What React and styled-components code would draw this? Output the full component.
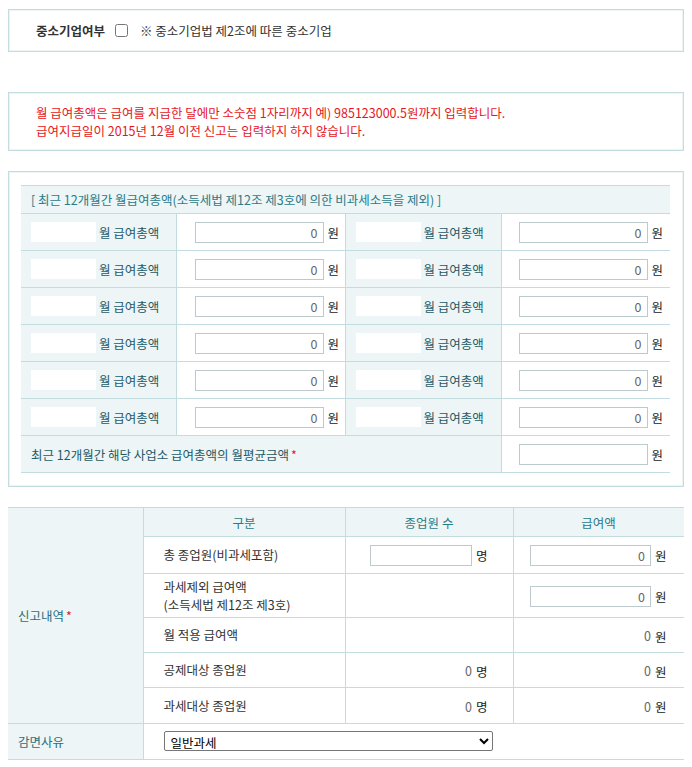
import React from 'react';
import styled, { createGlobalStyle } from 'styled-components';

const GlobalStyle = createGlobalStyle`
	body {
		margin: 8px;
		font-family: "Noto Sans CJK KR", "Liberation Sans", sans-serif;
		font-size: 12.5px;
		color: #333;
		background: #fff;
	}
	input, select {
		font-family: "Noto Sans CJK KR", "Liberation Sans", sans-serif;
		font-size: 12.5px;
	}
`;

const Page = styled.div`
	padding-top: 1px;
	display: flex;
	flex-direction: column;
`;

const Box = styled.div`
	border: 1px solid #c3dcdf;
	box-shadow: inset 0 0 0 1px #eef5f6;
	padding: ${(p) => p.$pad || '0'};
	margin-bottom: ${(p) => p.$gap || '0'};
`;

const CheckRow = styled.div`
	display: flex;
	align-items: center;
	height: 41px;
	padding-left: 27px;
`;

const CheckTitle = styled.span`
	font-weight: bold;
	color: #333;
`;

const Check = styled.input`
	width: 13px;
	height: 13px;
	margin: 0 12px 0 10px;
`;

const Notice = styled.p`
	margin: 0;
	padding-left: 27px;
	color: #e8161b;
	line-height: 18px;
`;

const Table = styled.table`
	width: ${(p) => p.$width}px;
	border-collapse: collapse;
	table-layout: fixed;
`;

const Caption = styled.td`
	height: 27px;
	padding: 0 0 0 10px;
	background: #edf5f6;
	border-top: 1px solid #c3dcdf;
	border-bottom: 1px solid #c3dcdf;
	color: #2a7b88;
`;

const Row = styled.tr`
	height: ${(p) => p.$h}px;
	border-bottom: 1px solid #c3dcdf;
`;

const LabelCell = styled.td`
	padding: 0 0 0 10px;
	background: #edf5f6;
	border-right: 1px solid #c3dcdf;
	color: #1f5b66;
	white-space: nowrap;
`;

const LabelLine = styled.div`
	display: flex;
	align-items: center;
	gap: 3px;
`;

const MonthBox = styled.span`
	width: 65px;
	height: 20px;
	background: #fff;
`;

const InputCell = styled.td`
	padding: 0 0 0 ${(p) => p.$pl || 17}px;
	border-right: ${(p) => (p.$last ? 'none' : '1px solid #c3dcdf')};
	white-space: nowrap;
`;

const Amount = styled.input`
	box-sizing: border-box;
	width: ${(p) => p.$w}px;
	height: 21px;
	border: 1px solid #bccacd;
	padding: 0 5px;
	text-align: right;
	color: #666;
	vertical-align: middle;
	outline: none;
`;

const Unit = styled.span`
	margin-left: 4px;
	vertical-align: middle;
	color: #222;
`;

const Star = styled.span`
	color: #e8161b;
	margin-left: 2px;
`;

const ReportTable = styled(Table)`
	border-top: 1px solid #c3dcdf;
	border-right: 1px solid #c3dcdf;
`;

const SideHead = styled.td`
	padding: 0 0 0 10px;
	background: #edf5f6;
	border-right: 1px solid #c3dcdf;
	border-bottom: 1px solid #c3dcdf;
	color: #2a6f7b;
	white-space: nowrap;
`;

const ColHead = styled.td`
	background: #edf5f6;
	text-align: center;
	color: #2a7b88;
	border-right: 1px solid #c3dcdf;
`;

const TextCell = styled.td`
	padding: 0 0 0 20px;
	border-right: 1px solid #c3dcdf;
	line-height: 18px;
	color: #333;
`;

const ValueCell = styled.td`
	padding: 0 ${(p) => p.$pr}px 0 0;
	text-align: right;
	border-right: 1px solid #c3dcdf;
	white-space: nowrap;
`;

const Zero = styled.span`
	color: #666;
	vertical-align: middle;
`;

const SelectCell = styled.td`
	padding: 0 0 0 20px;
`;

const Reason = styled.select`
	width: 329px;
	height: 20px;
	border: 1px solid #767676;
	border-radius: 2px;
	background: #fff;
	color: #000;
	padding: 0 2px;
`;

const months = [0, 1, 2, 3, 4, 5];

const MonthLabel = () => (
	<LabelCell>
		<LabelLine>
			<MonthBox />
			월 급여총액
		</LabelLine>
	</LabelCell>
);

const MonthPair = () => (
	<Row $h={37}>
		<MonthLabel />
		<InputCell $pl={18}>
			<Amount $w={129} defaultValue="0" />
			<Unit>원</Unit>
		</InputCell>
		<MonthLabel />
		<InputCell $last>
			<Amount $w={129} defaultValue="0" />
			<Unit>원</Unit>
		</InputCell>
	</Row>
);

const App = () => {
	return (
		<Page>
			<GlobalStyle />
			<Box $gap="40px">
				<CheckRow>
					<CheckTitle>중소기업여부</CheckTitle>
					<Check type="checkbox" />
					<span>※ 중소기업법 제2조에 따른 중소기업</span>
				</CheckRow>
			</Box>

			<Box $gap="20px" $pad="11px 0 10px">
				<Notice>
					월 급여총액은 급여를 지급한 달에만 소숫점 1자리까지 예) 985123000.5원까지 입력합니다.
					<br />
					급여지급일이 2015년 12월 이전 신고는 입력하지 하지 않습니다.
				</Notice>
			</Box>

			<Box $gap="20px" $pad="13px 13px 13px 12px">
				<Table $width={649}>
					<colgroup>
						<col style={{ width: 155 }} />
						<col style={{ width: 169 }} />
						<col style={{ width: 156 }} />
						<col style={{ width: 169 }} />
					</colgroup>
					<tbody>
						<tr>
							<Caption colSpan={4}>
								[ 최근 12개월간 월급여총액(소득세법 제12조 제3호에 의한 비과세소득을 제외) ]
							</Caption>
						</tr>
						{months.map((m) => (
							<MonthPair key={m} />
						))}
						<Row $h={37}>
							<LabelCell colSpan={3}>
								최근 12개월간 해당 사업소 급여총액의 월평균금액
								<Star>*</Star>
							</LabelCell>
							<InputCell $last>
								<Amount $w={129} />
								<Unit>원</Unit>
							</InputCell>
						</Row>
					</tbody>
				</Table>
			</Box>

			<ReportTable $width={676}>
				<colgroup>
					<col style={{ width: 135 }} />
					<col style={{ width: 202 }} />
					<col style={{ width: 168 }} />
					<col style={{ width: 171 }} />
				</colgroup>
				<tbody>
					<Row $h={29}>
						<SideHead rowSpan={6}>
							신고내역
							<Star>*</Star>
						</SideHead>
						<ColHead>구분</ColHead>
						<ColHead>종업원 수</ColHead>
						<ColHead>급여액</ColHead>
					</Row>
					<Row $h={37}>
						<TextCell>총 종업원(비과세포함)</TextCell>
						<ValueCell $pr={25}>
							<Amount $w={102} />
							<Unit>명</Unit>
						</ValueCell>
						<ValueCell $pr={17}>
							<Amount $w={121} defaultValue="0" />
							<Unit>원</Unit>
						</ValueCell>
					</Row>
					<Row $h={44}>
						<TextCell>
							과세제외 급여액
							<br />
							(소득세법 제12조 제3호)
						</TextCell>
						<ValueCell $pr={25} />
						<ValueCell $pr={17}>
							<Amount $w={121} defaultValue="0" />
							<Unit>원</Unit>
						</ValueCell>
					</Row>
					<Row $h={35}>
						<TextCell>월 적용 급여액</TextCell>
						<ValueCell $pr={25} />
						<ValueCell $pr={17}>
							<Zero>0</Zero>
							<Unit>원</Unit>
						</ValueCell>
					</Row>
					<Row $h={35}>
						<TextCell>공제대상 종업원</TextCell>
						<ValueCell $pr={25}>
							<Zero>0</Zero>
							<Unit>명</Unit>
						</ValueCell>
						<ValueCell $pr={17}>
							<Zero>0</Zero>
							<Unit>원</Unit>
						</ValueCell>
					</Row>
					<Row $h={36}>
						<TextCell>과세대상 종업원</TextCell>
						<ValueCell $pr={25}>
							<Zero>0</Zero>
							<Unit>명</Unit>
						</ValueCell>
						<ValueCell $pr={17}>
							<Zero>0</Zero>
							<Unit>원</Unit>
						</ValueCell>
					</Row>
					<Row $h={36}>
						<SideHead>감면사유</SideHead>
						<SelectCell colSpan={3}>
							<Reason defaultValue="일반과세">
								<option value="일반과세">일반과세</option>
							</Reason>
						</SelectCell>
					</Row>
				</tbody>
			</ReportTable>
		</Page>
	);
};

export default App;
